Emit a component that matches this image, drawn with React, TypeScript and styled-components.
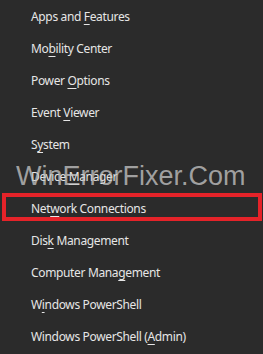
import React from "react";
import styled, { createGlobalStyle } from "styled-components";

const Global = createGlobalStyle`
  html, body { margin: 0; padding: 0; background: #2b2b2b; }
  #root { width: 263px; height: 354px; }
`;

const Menu = styled.div`
  position: relative;
  width: 263px;
  height: 354px;
  background: #2b2b2b;
  display: flex;
  flex-direction: column;
  overflow: hidden;
`;

const Row = styled.div`
  position: relative;
  height: 32px;
  display: flex;
  align-items: center;
  padding-left: 31px;
`;

const Label = styled.span`
  font-family: "Noto Sans", "Open Sans", sans-serif;
  font-size: 12px;
  letter-spacing: -0.35px;
  color: #e6e6e6;
  white-space: pre;
`;

const Key = styled.span`
  text-decoration: underline;
  text-decoration-thickness: 1px;
  text-underline-offset: 3px;
`;

const Highlight = styled.div`
  position: absolute;
  left: 2px;
  top: 1px;
  width: 260px;
  height: 28px;
  box-sizing: border-box;
  border: 4px solid #e52329;
  pointer-events: none;
`;

const Watermark = styled.div`
  position: absolute;
  left: 16px;
  top: 163px;
  font-family: "Liberation Sans", Arial, sans-serif;
  font-size: 27px;
  line-height: 27px;
  color: rgba(200, 200, 200, 0.75);
  white-space: nowrap;
  pointer-events: none;
`;

type Item = { pre: string; key: string; post: string; highlight?: boolean };

const items: Item[] = [
  { pre: "Apps and ", key: "F", post: "eatures" },
  { pre: "Mo", key: "b", post: "ility Center" },
  { pre: "Power ", key: "O", post: "ptions" },
  { pre: "Event ", key: "V", post: "iewer" },
  { pre: "S", key: "y", post: "stem" },
  { pre: "Device ", key: "M", post: "anager" },
  { pre: "Net", key: "w", post: "ork Connections", highlight: true },
  { pre: "Dis", key: "k", post: " Management" },
  { pre: "Computer Mana", key: "g", post: "ement" },
  { pre: "W", key: "i", post: "ndows PowerShell" },
  { pre: "Windows PowerShell (", key: "A", post: "dmin)" },
];

export default function App() {
  return (
    <>
      <Global />
      <Menu>
        {items.map((it) => (
          <Row key={it.pre + it.post}>
            <Label>
              {it.pre}
              <Key>{it.key}</Key>
              {it.post}
            </Label>
            {it.highlight && <Highlight />}
          </Row>
        ))}
        <Watermark>WinErrorFixer.Com</Watermark>
      </Menu>
    </>
  );
}
